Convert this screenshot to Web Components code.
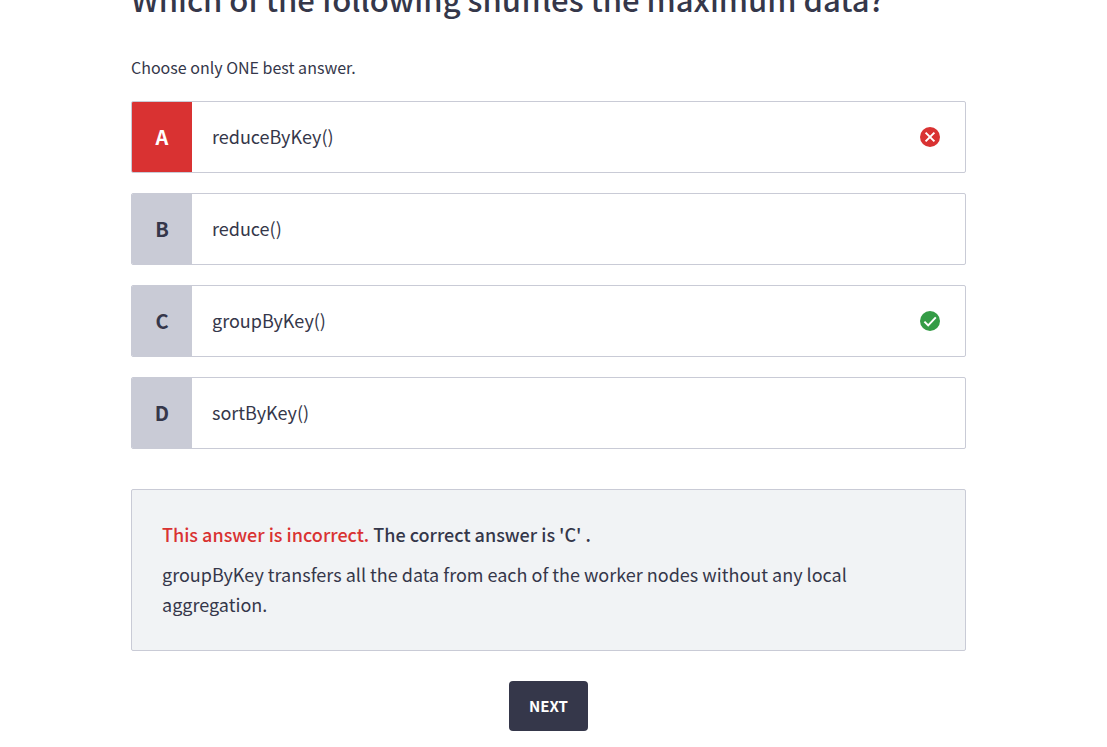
<!DOCTYPE html>
<html lang="en">
<head>
<meta charset="utf-8">
<meta name="viewport" content="width=device-width, initial-scale=1">
<title>Quiz</title>
<style>
  body {
    margin: 0;
    padding: 0 10px 0 0;
    background: #fff;
    color: #35374a;
    font-family: "Noto Sans CJK SC", "Noto Sans", sans-serif;
    overflow-x: hidden;
  }
</style>
</head>
<body>
<quiz-page>
  <quiz-question slot="question">
    Which of the following shuffles the maximum data?
    <span slot="hint">Choose only ONE best answer.</span>
  </quiz-question>
  <answer-option letter="A" state="wrong">reduceByKey()</answer-option>
  <answer-option letter="B">reduce()</answer-option>
  <answer-option letter="C" state="right">groupByKey()</answer-option>
  <answer-option letter="D">sortByKey()</answer-option>
  <answer-feedback slot="feedback">
    <span slot="verdict">This answer is incorrect.</span>
    <span slot="correct">The correct answer is 'C' .</span>
    groupByKey transfers all the data from each of the worker nodes without any local aggregation.
  </answer-feedback>
  <next-button slot="action">NEXT</next-button>
</quiz-page>

<script>
  const define = (name, html, setup) => customElements.define(name, class extends HTMLElement {
    constructor() {
      super();
      this.attachShadow({ mode: 'open' }).innerHTML = html;
    }
    connectedCallback() {
      if (setup) setup(this, this.shadowRoot);
    }
  });

  define('quiz-page', `
    <style>
      :host { display: block; }
      main { max-width: 835px; margin: 0 auto; padding-bottom: 16px; }
      .options { display: grid; gap: 20px; margin: 20px 0 40px; }
      footer { display: flex; justify-content: center; margin-top: 30px; }
    </style>
    <main>
      <slot name="question"></slot>
      <div class="options"><slot></slot></div>
      <slot name="feedback"></slot>
      <footer><slot name="action"></slot></footer>
    </main>`);

  define('quiz-question', `
    <style>
      :host { display: block; }
      h1 { margin: -25px 0 32px; font-size: 31px; line-height: 48px; font-weight: 500; }
      p { margin: 0; font-size: 16px; line-height: 24px; padding-bottom: 2px; }
    </style>
    <h1><slot></slot></h1>
    <p><slot name="hint"></slot></p>`);

  define('answer-option', `
    <style>
      :host { display: block; }
      button {
        box-sizing: border-box; width: 100%; min-height: 72px; padding: 0;
        display: flex; align-items: stretch; overflow: hidden;
        border: 1px solid #c9cbd6; border-radius: 2px; background: #fff;
        color: inherit; font: inherit; font-size: 18px; line-height: 30px; text-align: left;
      }
      .letter {
        flex: none; width: 60px; display: flex; align-items: center; justify-content: center;
        background: #c9cbd6; font-size: 20px; font-weight: 700;
      }
      :host([state="wrong"]) .letter { background: #d93232; color: #fff; }
      .text { flex: 1; padding: 19px 20px 21px; }
      svg { display: none; flex: none; align-self: center; width: 20px; height: 20px; margin-right: 25px; }
      :host([state="wrong"]) .cross, :host([state="right"]) .check { display: block; }
    </style>
    <button type="button">
      <span class="letter"></span>
      <span class="text"><slot></slot></span>
      <svg class="cross" viewBox="0 0 20 20" aria-hidden="true">
        <circle cx="10" cy="10" r="10" fill="#d93232"/>
        <path d="M5.6 5.6l8.8 8.8M14.4 5.6l-8.8 8.8" fill="none" stroke="#fff" stroke-width="2"/>
      </svg>
      <svg class="check" viewBox="0 0 20 20" aria-hidden="true">
        <circle cx="10" cy="10" r="10" fill="#349c46"/>
        <path d="M4.4 10.6l3.8 3.8 7.6-8" fill="none" stroke="#fff" stroke-width="2"/>
      </svg>
    </button>`,
    (host, root) => { root.querySelector('.letter').textContent = host.getAttribute('letter'); });

  define('answer-feedback', `
    <style>
      :host {
        display: block; padding: 29px 30px 31px; border: 1px solid #c9cbd6; border-radius: 2px;
        background: #f1f3f5; font-size: 18px; line-height: 30px;
      }
      p { margin: 0; }
      .result { margin-bottom: 10px; font-weight: 500; }
      .verdict { color: #d93232; }
    </style>
    <p class="result"><span class="verdict"><slot name="verdict"></slot></span> <slot name="correct"></slot></p>
    <p><slot></slot></p>`);

  define('next-button', `
    <style>
      :host { display: block; }
      button {
        min-height: 50px; padding: 0 20px; border: 0; border-radius: 4px;
        background: #35374a; color: #fff; font: inherit; font-size: 15px; line-height: 24px; font-weight: 700;
      }
    </style>
    <button type="button"><slot></slot></button>`);
</script>
</body>
</html>
